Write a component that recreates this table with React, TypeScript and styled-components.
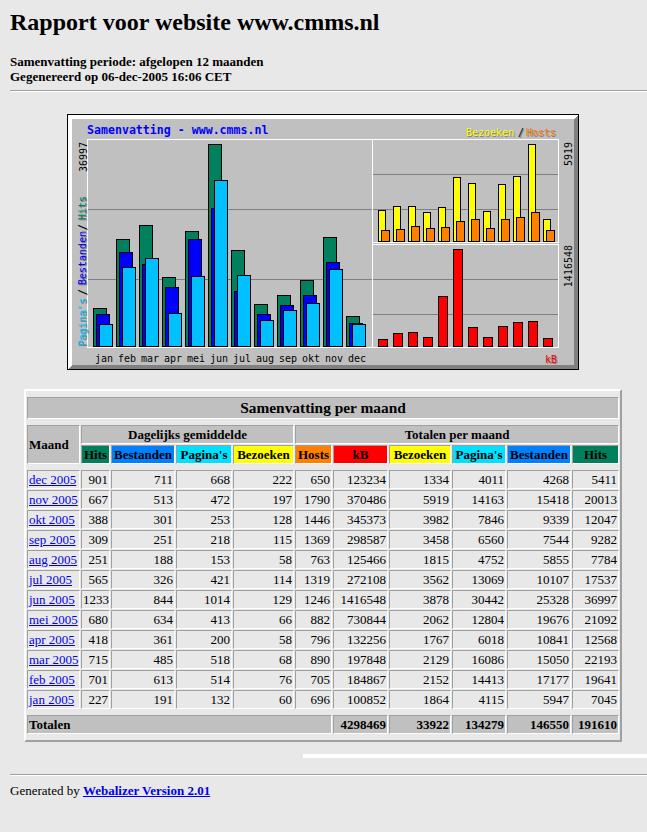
import React from 'react';
import styled, { createGlobalStyle, css } from 'styled-components';

const GlobalStyle = createGlobalStyle`
  html, body { margin: 0; padding: 0; background: #e8e8e8; }
  body { font-family: "Liberation Serif", "Times New Roman", serif; color: #000; }
`;

type Month = { name: string; hits: number; files: number; pages: number; visits: number; hosts: number; kb: number };

const chartData: Month[] = [
  { name: 'jan', hits: 7045, files: 5947, pages: 4115, visits: 1864, hosts: 696, kb: 100852 },
  { name: 'feb', hits: 19641, files: 17177, pages: 14413, visits: 2152, hosts: 705, kb: 184867 },
  { name: 'mar', hits: 22193, files: 15050, pages: 16086, visits: 2129, hosts: 890, kb: 197848 },
  { name: 'apr', hits: 12568, files: 10841, pages: 6018, visits: 1767, hosts: 796, kb: 132256 },
  { name: 'mei', hits: 21092, files: 19676, pages: 12804, visits: 2062, hosts: 882, kb: 730844 },
  { name: 'jun', hits: 36997, files: 25328, pages: 30442, visits: 3878, hosts: 1246, kb: 1416548 },
  { name: 'jul', hits: 17537, files: 10107, pages: 13069, visits: 3562, hosts: 1319, kb: 272108 },
  { name: 'aug', hits: 7784, files: 5855, pages: 4752, visits: 1815, hosts: 763, kb: 125466 },
  { name: 'sep', hits: 9282, files: 7544, pages: 6560, visits: 3458, hosts: 1369, kb: 298587 },
  { name: 'okt', hits: 12047, files: 9339, pages: 7846, visits: 3982, hosts: 1446, kb: 345373 },
  { name: 'nov', hits: 20013, files: 15418, pages: 14163, visits: 5919, hosts: 1790, kb: 370486 },
  { name: 'dec', hits: 5411, files: 4268, pages: 4011, visits: 1334, hosts: 650, kb: 123234 },
];

const tableRows: [string, number, number, number, number, number, number, number, number, number, number][] = [
  ['dec 2005', 901, 711, 668, 222, 650, 123234, 1334, 4011, 4268, 5411],
  ['nov 2005', 667, 513, 472, 197, 1790, 370486, 5919, 14163, 15418, 20013],
  ['okt 2005', 388, 301, 253, 128, 1446, 345373, 3982, 7846, 9339, 12047],
  ['sep 2005', 309, 251, 218, 115, 1369, 298587, 3458, 6560, 7544, 9282],
  ['aug 2005', 251, 188, 153, 58, 763, 125466, 1815, 4752, 5855, 7784],
  ['jul 2005', 565, 326, 421, 114, 1319, 272108, 3562, 13069, 10107, 17537],
  ['jun 2005', 1233, 844, 1014, 129, 1246, 1416548, 3878, 30442, 25328, 36997],
  ['mei 2005', 680, 634, 413, 66, 882, 730844, 2062, 12804, 19676, 21092],
  ['apr 2005', 418, 361, 200, 58, 796, 132256, 1767, 6018, 10841, 12568],
  ['mar 2005', 715, 485, 518, 68, 890, 197848, 2129, 16086, 15050, 22193],
  ['feb 2005', 701, 613, 514, 76, 705, 184867, 2152, 14413, 17177, 19641],
  ['jan 2005', 227, 191, 132, 60, 696, 100852, 1864, 4115, 5947, 7045],
];

const totals = [4298469, 33922, 134279, 146550, 191610];

const C = {
  hits: '#00805c',
  files: '#0000ff',
  pages: '#00c0ff',
  visits: '#ffff00',
  hosts: '#ff8000',
  kb: '#ff0000',
  grey: '#c0c0c0',
  dkgrey: '#808080',
};

const Page = styled.div`
  padding: 8px 11px 30px 10px;
`;

const Title = styled.h2`
  margin: 0;
  font-size: 24px;
  line-height: 28px;
  font-weight: bold;
`;

const Meta = styled.div`
  margin-top: 18px;
  font-size: 13px;
  line-height: 15px;
  font-weight: bold;
`;

const Rule = styled.hr<{ $top: number }>`
  margin: ${(p) => p.$top}px -11px 0 0;
  height: 0;
  border: 0;
  border-top: 1px solid #a0a0a0;
  border-bottom: 1px solid #ffffff;
`;

const ChartSvg = styled.svg`
  display: block;
  margin: 22px auto 0;
  shape-rendering: crispEdges;
`;

const ChartText = styled.text<{ $bold?: boolean }>`
  font-family: "DejaVu Sans Mono", "Liberation Mono", monospace;
  font-size: ${(p) => (p.$bold ? '11.6px' : '10px')};
  font-weight: ${(p) => (p.$bold ? 'bold' : 'normal')};
`;

function Shadowed({ x, y, color, children, up }: { x: number; y: number; color: string; children: string; up?: boolean }) {
  const rot = (xx: number, yy: number) => (up ? `rotate(-90 ${xx} ${yy})` : undefined);
  return (
    <>
      <ChartText x={x + 1} y={y + 1} fill={C.dkgrey} transform={rot(x + 1, y + 1)}>
        {children}
      </ChartText>
      <ChartText x={x} y={y} fill={color} transform={rot(x, y)}>
        {children}
      </ChartText>
    </>
  );
}

function Bar({ x, w, top, bottom, fill }: { x: number; w: number; top: number; bottom: number; fill: string }) {
  return <rect x={x + 0.5} y={top + 0.5} width={w} height={Math.max(bottom - top, 0)} fill={fill} stroke="#000" />;
}

function Chart() {
  const maxHits = Math.max(...chartData.map((d) => d.hits));
  const maxVis = Math.max(...chartData.map((d) => d.visits));
  const maxKb = Math.max(...chartData.map((d) => d.kb));
  const lh = (v: number) => 232 - Math.round((v / maxHits) * 202);
  const th = (v: number) => 127 - Math.round((v / maxVis) * 97);
  const bh = (v: number) => 232 - Math.round((v / maxKb) * 97);

  return (
    <ChartSvg width={512} height={256} viewBox="0 0 512 256">
      <rect x={0.5} y={0.5} width={511} height={255} fill={C.grey} stroke="#000" />
      <polygon points="1,1 511,1 507,5 5,5 5,251 1,255" fill="#ffffff" />
      <polygon points="511,1 511,255 1,255 5,251 507,251 507,5" fill={C.dkgrey} />

      <line x1={21} x2={305} y1={95.5} y2={95.5} stroke={C.dkgrey} />
      <line x1={21} x2={305} y1={165.5} y2={165.5} stroke={C.dkgrey} />
      <line x1={306} x2={491} y1={60.5} y2={60.5} stroke={C.dkgrey} />
      <line x1={306} x2={491} y1={95.5} y2={95.5} stroke={C.dkgrey} />
      <line x1={306} x2={491} y1={165.5} y2={165.5} stroke={C.dkgrey} />
      <line x1={306} x2={491} y1={200.5} y2={200.5} stroke={C.dkgrey} />

      <rect x={20.5} y={25.5} width={285} height={208} fill="none" stroke="#ffffff" />
      <rect x={305.5} y={25.5} width={186} height={103} fill="none" stroke="#ffffff" />
      <rect x={305.5} y={130.5} width={186} height={103} fill="none" stroke="#ffffff" />

      {chartData.map((d, i) => {
        const x = 26 + i * 23;
        const r = 311 + i * 15;
        return (
          <g key={d.name}>
            <Bar x={x} w={13} top={lh(d.hits)} bottom={232} fill={C.hits} />
            <Bar x={x + 3} w={13} top={lh(d.files)} bottom={232} fill={C.files} />
            <Bar x={x + 6} w={13} top={lh(d.pages)} bottom={232} fill={C.pages} />
            <Bar x={r} w={7} top={th(d.visits)} bottom={127} fill={C.visits} />
            <Bar x={r + 3} w={8} top={th(d.hosts)} bottom={127} fill={C.hosts} />
            <Bar x={r} w={9} top={bh(d.kb)} bottom={232} fill={C.kb} />
            <ChartText x={28 + i * 23} y={248} fill="#000">
              {d.name}
            </ChartText>
          </g>
        );
      })}

      <ChartText $bold x={20} y={20} fill="#0000ff">
        Samenvatting - www.cmms.nl
      </ChartText>

      <Shadowed x={399} y={22} color={C.visits}>Bezoeken</Shadowed>
      <Shadowed x={451} y={22} color="#000">/</Shadowed>
      <Shadowed x={459} y={22} color={C.hosts}>Hosts</Shadowed>
      <Shadowed x={478} y={249} color={C.kb}>kB</Shadowed>

      <Shadowed up x={19} y={232} color={C.pages}>Pagina's</Shadowed>
      <Shadowed up x={19} y={181} color="#000">/</Shadowed>
      <Shadowed up x={19} y={171} color={C.files}>Bestanden</Shadowed>
      <Shadowed up x={19} y={116} color="#000">/</Shadowed>
      <Shadowed up x={19} y={106} color={C.hits}>Hits</Shadowed>

      <ChartText x={20} y={28} fill="#000" textAnchor="end" transform="rotate(-90 20 28)">
        {String(maxHits)}
      </ChartText>
      <ChartText x={505} y={28} fill="#000" textAnchor="end" transform="rotate(-90 505 28)">
        {String(maxVis)}
      </ChartText>
      <ChartText x={505} y={131} fill="#000" textAnchor="end" transform="rotate(-90 505 131)">
        {String(maxKb)}
      </ChartText>
    </ChartSvg>
  );
}

const SummaryTable = styled.table`
  width: 598px;
  margin: 19px auto 0;
  table-layout: fixed;
  border-collapse: separate;
  border-spacing: 1px;
  border: 2px solid;
  border-color: #ffffff #a0a0a0 #a0a0a0 #ffffff;
  font-size: 13px;
  line-height: 15px;
`;

const Col = styled.col<{ $w: number }>`
  width: ${(p) => p.$w}px;
`;

const cellBase = css`
  padding: 1px;
  border: 1px solid;
  border-color: #a0a0a0 #ffffff #ffffff #a0a0a0;
  white-space: nowrap;
  overflow: hidden;
  font-size: 13px;
  line-height: 15px;
`;

const Spacer = styled.td`
  height: 4px;
  padding: 0;
  border: 0;
`;

const Caption = styled.th`
  ${cellBase};
  background: ${C.grey};
  font-size: 15.4px;
  line-height: 18px;
  text-align: center;
`;

const GroupHead = styled.th<{ $left?: boolean }>`
  ${cellBase};
  background: ${C.grey};
  text-align: ${(p) => (p.$left ? 'left' : 'center')};
`;

const ColHead = styled.th<{ $bg: string }>`
  ${cellBase};
  background: ${(p) => p.$bg};
  text-align: center;
`;

const MonthCell = styled.td`
  ${cellBase};
  text-align: left;
`;

const MonthLink = styled.a`
  color: #0000ee;
  text-decoration: underline;
`;

const NumCell = styled.td`
  ${cellBase};
  text-align: right;
`;

const TotalCell = styled.th<{ $left?: boolean }>`
  ${cellBase};
  background: ${C.grey};
  text-align: ${(p) => (p.$left ? 'left' : 'right')};
`;

const WhiteBar = styled.div`
  height: 4px;
  margin: 12px -11px 0 293px;
  background: #ffffff;
`;

const Footer = styled.div`
  margin-top: 7px;
  font-size: 13px;
  line-height: 15px;
`;

const FooterLink = styled.a`
  color: #0000ee;
  font-weight: bold;
  text-decoration: underline;
`;

const colWidths = [53, 29, 64, 56, 61, 37, 55, 62, 54, 64, 47];

function SpacerRow() {
  return (
    <tr>
      <Spacer colSpan={11} />
    </tr>
  );
}

function Summary() {
  return (
    <SummaryTable>
      <colgroup>
        {colWidths.map((w, i) => (
          <Col key={i} $w={w} />
        ))}
      </colgroup>
      <tbody>
        <SpacerRow />
        <tr>
          <Caption colSpan={11}>Samenvatting per maand</Caption>
        </tr>
        <SpacerRow />
        <tr>
          <GroupHead $left rowSpan={2}>Maand</GroupHead>
          <GroupHead colSpan={4}>Dagelijks gemiddelde</GroupHead>
          <GroupHead colSpan={6}>Totalen per maand</GroupHead>
        </tr>
        <tr>
          <ColHead $bg="#00805c">Hits</ColHead>
          <ColHead $bg="#0080ff">Bestanden</ColHead>
          <ColHead $bg="#00e0ff">Pagina's</ColHead>
          <ColHead $bg="#ffff00">Bezoeken</ColHead>
          <ColHead $bg="#ff8000">Hosts</ColHead>
          <ColHead $bg="#ff0000">kB</ColHead>
          <ColHead $bg="#ffff00">Bezoeken</ColHead>
          <ColHead $bg="#00e0ff">Pagina's</ColHead>
          <ColHead $bg="#0080ff">Bestanden</ColHead>
          <ColHead $bg="#00805c">Hits</ColHead>
        </tr>
        <SpacerRow />
        {tableRows.map(([month, ...nums]) => (
          <tr key={month}>
            <MonthCell>
              <MonthLink href="#">{month}</MonthLink>
            </MonthCell>
            {nums.map((n, i) => (
              <NumCell key={i}>{n}</NumCell>
            ))}
          </tr>
        ))}
        <SpacerRow />
        <tr>
          <TotalCell $left colSpan={6}>Totalen</TotalCell>
          {totals.map((t, i) => (
            <TotalCell key={i}>{t}</TotalCell>
          ))}
        </tr>
        <SpacerRow />
      </tbody>
    </SummaryTable>
  );
}

export default function App() {
  return (
    <>
      <GlobalStyle />
      <Page>
        <Title>Rapport voor website www.cmms.nl</Title>
        <Meta>
          Samenvatting periode: afgelopen 12 maanden
          <br />
          Gegenereerd op 06-dec-2005 16:06 CET
        </Meta>
        <Rule $top={6} />
        <Chart />
        <Summary />
        <WhiteBar />
        <Rule $top={16} />
        <Footer>
          Generated by <FooterLink href="#">Webalizer Version 2.01</FooterLink>
        </Footer>
      </Page>
    </>
  );
}
